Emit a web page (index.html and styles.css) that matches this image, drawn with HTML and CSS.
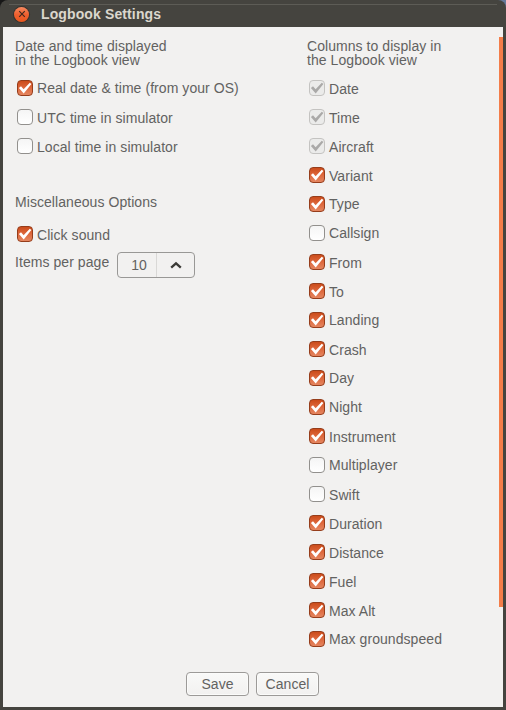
FILE: index.html
```
<!DOCTYPE html>
<html lang="en">
<head>
<meta charset="utf-8">
<title>Logbook Settings</title>
<link rel="stylesheet" href="styles.css">
</head>
<body>
<svg class="defs" aria-hidden="true"><symbol id="tick" viewBox="0 0 16 16"><path d="M1.9 8.1 4 6.2l2.6 3L12.8 2.8l1.6 1.2-7.7 9.5z"/></symbol></svg>
<div class="window">
  <header class="titlebar">
    <span class="close"><svg viewBox="0 0 8 8"><path d="M1.2 1.2 6.8 6.8M6.8 1.2 1.2 6.8"/></svg></span>
    <h1>Logbook Settings</h1>
  </header>
  <main class="content">
    <div class="columns">
      <section class="left">
        <h2>Date and time displayed<br>in the Logbook view</h2>
        <div class="options">
          <label class="row raised"><span class="box on"><svg><use href="#tick"/></svg></span><span class="text">Real date &amp; time (from your OS)</span></label>
          <label class="row"><span class="box"></span><span class="text">UTC time in simulator</span></label>
          <label class="row"><span class="box"></span><span class="text">Local time in simulator</span></label>
        </div>
        <h2 class="misc">Miscellaneous Options</h2>
        <label class="row"><span class="box on"><svg><use href="#tick"/></svg></span><span class="text">Click sound</span></label>
        <div class="pager"><span class="pager-label">Items per page</span><div class="spinner"><span class="value">10</span><span class="up"><svg viewBox="0 0 12 8"><path d="M1.2 6.6 6 2.3l4.8 4.3"/></svg></span></div></div>
      </section>
      <section class="right">
        <h2>Columns to display in<br>the Logbook view</h2>
        <div class="options">
          <label class="row"><span class="box locked"><svg><use href="#tick"/></svg></span><span class="text">Date</span></label>
          <label class="row"><span class="box locked"><svg><use href="#tick"/></svg></span><span class="text">Time</span></label>
          <label class="row"><span class="box locked"><svg><use href="#tick"/></svg></span><span class="text">Aircraft</span></label>
          <label class="row"><span class="box on"><svg><use href="#tick"/></svg></span><span class="text">Variant</span></label>
          <label class="row raised"><span class="box on"><svg><use href="#tick"/></svg></span><span class="text">Type</span></label>
          <label class="row raised"><span class="box"></span><span class="text">Callsign</span></label>
          <label class="row"><span class="box on"><svg><use href="#tick"/></svg></span><span class="text">From</span></label>
          <label class="row"><span class="box on"><svg><use href="#tick"/></svg></span><span class="text">To</span></label>
          <label class="row raised"><span class="box on"><svg><use href="#tick"/></svg></span><span class="text">Landing</span></label>
          <label class="row"><span class="box on"><svg><use href="#tick"/></svg></span><span class="text">Crash</span></label>
          <label class="row raised"><span class="box on"><svg><use href="#tick"/></svg></span><span class="text">Day</span></label>
          <label class="row raised"><span class="box on"><svg><use href="#tick"/></svg></span><span class="text">Night</span></label>
          <label class="row"><span class="box on"><svg><use href="#tick"/></svg></span><span class="text">Instrument</span></label>
          <label class="row raised"><span class="box"></span><span class="text">Multiplayer</span></label>
          <label class="row"><span class="box"></span><span class="text">Swift</span></label>
          <label class="row"><span class="box on"><svg><use href="#tick"/></svg></span><span class="text">Duration</span></label>
          <label class="row"><span class="box on"><svg><use href="#tick"/></svg></span><span class="text">Distance</span></label>
          <label class="row"><span class="box on"><svg><use href="#tick"/></svg></span><span class="text">Fuel</span></label>
          <label class="row"><span class="box on"><svg><use href="#tick"/></svg></span><span class="text">Max Alt</span></label>
          <label class="row raised"><span class="box on"><svg><use href="#tick"/></svg></span><span class="text">Max groundspeed</span></label>
        </div>
      </section>
      <div class="scrollbar"></div>
    </div>
    <footer class="actions"><button>Save</button><button>Cancel</button></footer>
  </main>
</div>
</body>
</html>
```

FILE: styles.css
```
* { box-sizing: border-box; }
body {
  margin: 0;
  background: linear-gradient(90deg, #171717 50%, #65799b 50%);
  font: 14px/14px "Liberation Sans", Arial, sans-serif;
  letter-spacing: 0.06px;
  color: #626261;
  overflow: hidden;
}
.defs { position: absolute; width: 0; height: 0; }
.window {
  height: 710px;
  padding: 0 3px 3px;
  display: flex;
  flex-direction: column;
  background: #45443f;
  border-radius: 8px 8px 0 0;
}
.titlebar {
  height: 27px;
  flex: none;
  display: flex;
  align-items: center;
  gap: 12px;
  padding: 1px 0 0 11px;
  background: linear-gradient(#5d5c56, #5d5c56) 6px 4px / calc(100% - 12px) 1px no-repeat;
}
.titlebar h1 { margin: 0; font-size: 14px; font-weight: bold; letter-spacing: 0.12px; color: #dbd7cd; }
.close {
  width: 15px;
  height: 15px;
  display: flex;
  align-items: center;
  justify-content: center;
  border-radius: 50%;
  background: linear-gradient(#f58a60, #ef6030 50%, #e9561c);
  box-shadow: 0 0 0 1px #35322e;
}
.close svg { width: 8px; height: 8px; stroke: #42291e; stroke-width: 1.2; fill: none; }
.content { flex: 1; background: #f2f1f0; }
.columns { height: 638px; display: flex; padding: 10px 0 0 12px; }
.left { width: 292px; padding-top: 2px; }
.right { flex: 1; padding-top: 2px; }
h2 { margin: 0; font-size: 14px; font-weight: normal; }
.options { padding-top: 6px; }
.row { height: 29px; display: flex; align-items: center; gap: 4px; padding-left: 2px; }
.row .text { padding-top: 3px; white-space: nowrap; }
.raised .text { padding-top: 1px; }
.box {
  width: 16px;
  height: 16px;
  display: flex;
  flex: none;
  border: 1px solid #92908d;
  border-radius: 4px;
  background: linear-gradient(#f5f5f5, #fff);
}
.box svg { width: 16px; height: 16px; margin: -1px; flex: none; fill: #fff; }
.box.on { border-color: #963d1b; background: linear-gradient(#cb4c1b, #dc6539 45%, #e58660); }
.box.locked { border-color: #c4c3c1; background: #ebebea; }
.box.locked svg { fill: #aaa9a8; }
.misc { padding: 35px 0 10px; }
.pager { display: flex; gap: 7px; padding-top: 4px; }
.pager-label { width: 95px; padding-top: 3px; white-space: nowrap; }
.spinner {
  width: 78px;
  height: 26px;
  display: flex;
  border: 1px solid #999896;
  border-radius: 4px;
}
.value { width: 39px; padding: 5px 0 0 4px; text-align: center; border-right: 1px solid #d9d8d6; }
.up { flex: 1; display: flex; align-items: center; justify-content: center; }
.up svg { width: 12px; height: 8px; stroke: #3c3b37; stroke-width: 2.3; fill: none; }
.scrollbar { width: 4px; height: 570px; background: #f37d49; }
.actions { display: flex; justify-content: center; gap: 7px; padding: 7px 1px 0 0; }
button {
  width: 63px;
  height: 24px;
  padding: 0;
  font: inherit;
  letter-spacing: inherit;
  color: inherit;
  border: 1px solid #9c9a98;
  border-radius: 4px;
  background: linear-gradient(#f9f9f8, #f2f1f0);
  box-shadow: inset 0 0 0 1px #fbfbfa;
}
```
